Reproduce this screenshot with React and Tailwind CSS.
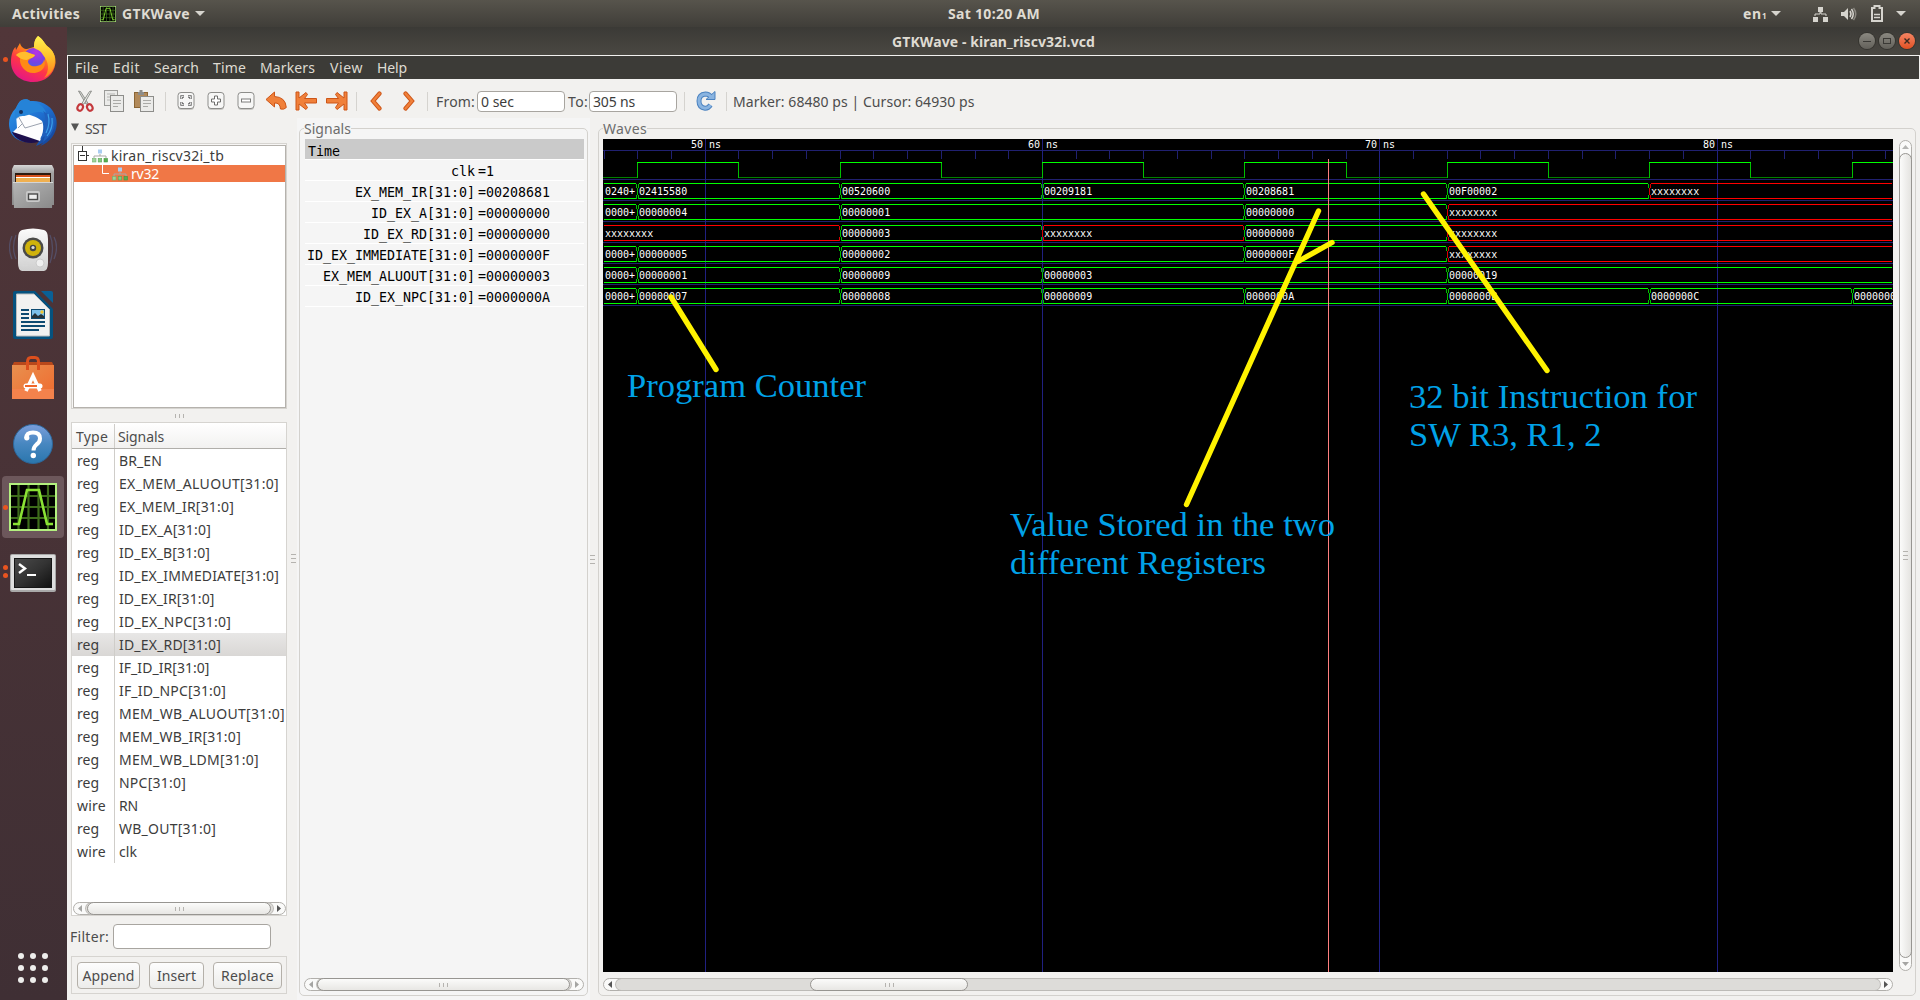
import { useLayoutEffect, useRef, useState } from "react";

const UI = "font-['Noto_Sans',sans-serif]";

/* One line of text, tracked so that it fills exactly `w` pixels. */
function T({ children, w, className = "" }) {
  const ref = useRef(null);
  const [ls, setLs] = useState(0);
  useLayoutEffect(() => {
    const r = document.createRange();
    r.selectNodeContents(ref.current);
    const nat = r.getBoundingClientRect().width;
    setLs((w - nat) / String(children).length);
  }, []);
  return (
    <span className={`inline-block shrink-0 whitespace-nowrap ${className}`} style={{ width: w, letterSpacing: ls }}>
      <span ref={ref}>{children}</span>
    </span>
  );
}

/* ---------- launcher icons (48 x 48) ---------- */
const Firefox = () => (
  <svg width="48" height="48" viewBox="0 0 48 48">
    <defs>
      <linearGradient id="ff1" x1="0.8" y1="0" x2="0.3" y2="1">
        <stop offset="0" stopColor="#fff44f" /><stop offset="0.35" stopColor="#ff980e" /><stop offset="0.65" stopColor="#ff3647" /><stop offset="1" stopColor="#e31587" />
      </linearGradient>
      <radialGradient id="ff2" cx="0.6" cy="0.2" r="0.9">
        <stop offset="0" stopColor="#b833e1" /><stop offset="0.5" stopColor="#7542e5" /><stop offset="1" stopColor="#3a6fd8" />
      </radialGradient>
      <linearGradient id="ff3" x1="0.5" y1="0" x2="0.5" y2="1">
        <stop offset="0" stopColor="#fff44f" /><stop offset="0.5" stopColor="#ffc02b" /><stop offset="1" stopColor="#ff7a1e" />
      </linearGradient>
    </defs>
    <path d="M29 1 C34 4 35 8 38 11 C44 15 47 21 46.500 28 C45 40 36 47 24 47 C11 47 2 38 2 27 C2 20 4 14 6.500 12 L7 15 L11 8 C12 12 15 14 18 14 L25 12 C25 7 26 4 29 1Z" fill="url(#ff1)" />
    <circle cx="25" cy="24" r="11" fill="url(#ff2)" />
    <path d="M29 1 C34 4 35 8 38 11 C45 16 47 22 45.500 30 C44 36 40 41 35 43 C41 36 40 27 34 20 C32 16 29 15 25 13 C25 7 26 4 29 1Z" fill="url(#ff3)" />
    <path d="M7 20 C11 16 17 16 20 18 L26 20 C25 23 21 23 19 26 C19 30 23 32 28 31 C33 30 35 27 35 24 C38 30 34 37 26 38 C16 39 10 30 11 23Z" fill="#ff8a16" />
    <path d="M7 20 C11 16 17 16 20 18 L26 20 C25 23 21 23 18 25 C14 25 10 23 7 20Z" fill="#ffbd2e" />
  </svg>
);

const Thunderbird = () => (
  <svg width="50" height="48" viewBox="0 0 50 48">
    <defs>
      <linearGradient id="tb1" x1="0" y1="0" x2="1" y2="1">
        <stop offset="0" stopColor="#2f9bea" /><stop offset="0.5" stopColor="#1f6fd0" /><stop offset="1" stopColor="#123a8c" />
      </linearGradient>
    </defs>
    <path d="M14 1 C17 0 20 0 22 2 C34 1 45 7 48 19 C51 31 44 43 32 47 L35 44 L28 47 L31 42 C20 45 8 43 3 34 C-1 25 1 16 8 9 C10 5 11 2 14 1Z" fill="url(#tb1)" />
    <path d="M4 33 C8 42 20 46 30 43 L33 40 L5 33Z" fill="#1d0f4d" />
    <path d="M8 15 L9 29 L5 33 L32 42 C34 38 37 28 34 22 C28 17 16 13 8 15Z" fill="#fdfdfe" />
    <path d="M10 17 L17 29 L34 24 M10 29 L14 25" stroke="#8e96a5" strokeWidth="0.900" fill="none" />
    <path d="M22 2 C32 3 38 9 39 18 C38 13 29 11 20 16 C15 18 10 16 9 20 C4 17 8 5 14 1 C17 0 20 0 22 2Z" fill="#2583d8" />
    <path d="M35 12 C40 20 37 32 32 40 L37 37 L35 43 C44 37 48 28 46 19Z" fill="#2060bd" />
    <path d="M40 15 C42 22 41 28 38 34 M44 19 C45 26 43 32 39 37" stroke="#3aa0ea" strokeWidth="1.200" fill="none" />
    <circle cx="13" cy="13" r="2" fill="#15315f" />
  </svg>
);

const Files = () => (
  <svg width="48" height="48" viewBox="0 0 48 48">
    <defs>
      <linearGradient id="fl1" x1="0" y1="0" x2="0" y2="1"><stop offset="0" stopColor="#d7d7d7" /><stop offset="0.2" stopColor="#a2a2a2" /><stop offset="1" stopColor="#8b8b8b" /></linearGradient>
      <linearGradient id="fl2" x1="0" y1="0" x2="1" y2="1"><stop offset="0" stopColor="#b5b5b5" /><stop offset="1" stopColor="#8a8a8a" /></linearGradient>
    </defs>
    <path d="M5 2 H43 L45 6 V42 H3 V6Z" fill="url(#fl1)" />
    <rect x="6" y="10" width="36" height="9" fill="#2e1a10" />
    <rect x="7" y="12" width="34" height="3" fill="#d9531e" />
    <rect x="7" y="14" width="34" height="5" fill="#f0b050" />
    <rect x="7" y="14" width="34" height="1" fill="#fff" />
    <path d="M4 19 H44 L43 45 H5Z" fill="url(#fl2)" />
    <path d="M4 19.500 H44" stroke="#d5d5d5" />
    <rect x="17" y="28" width="14" height="11" rx="2" fill="#c9c9c9" />
    <rect x="19.500" y="31" width="9" height="5.500" fill="#eee" stroke="#4a4a4a" strokeWidth="1.400" />
  </svg>
);

const Rhythmbox = () => (
  <svg width="48" height="48" viewBox="0 0 48 48">
    <defs><linearGradient id="rb" x1="0" y1="0" x2="0" y2="1"><stop offset="0" stopColor="#fbfbfb" /><stop offset="1" stopColor="#cfcfcf" /></linearGradient></defs>
    <g fill="none" stroke="#5d6d9c" opacity="0.45" strokeWidth="1.300">
      <path d="M7 8 Q2 20 7 32" /><path d="M3 9 Q-2 20 3 32" /><path d="M41 8 Q46 20 41 36" /><path d="M45 10 Q50 20 45 32" /><path d="M11 6 Q7 20 11 34" />
    </g>
    <path d="M13 3 Q24 0 35 3 Q39 4 39 12 V36 Q39 43 35 44 H13 Q9 43 9 36 V12 Q9 4 13 3Z" fill="url(#rb)" />
    <circle cx="24" cy="21" r="10.500" fill="#4a4a48" />
    <circle cx="24" cy="21" r="8" fill="#cfb20c" />
    <circle cx="24" cy="21" r="3.200" fill="#444" />
    <circle cx="24" cy="20.500" r="1.600" fill="#ddd" />
    <circle cx="31" cy="36" r="4" fill="#efefef" stroke="#c4c4c4" strokeWidth="0.800" />
    <rect x="14" y="35" width="4" height="4" fill="none" stroke="#d8d8d8" strokeWidth="0.800" />
  </svg>
);

const Writer = () => (
  <svg width="48" height="48" viewBox="0 0 48 48">
    <path d="M6 0 H26 L44 18 V46 Q44 48 42 48 H6 Q4 48 4 46 V2 Q4 0 6 0Z" fill="#05527f" />
    <path d="M32 0 H42 Q44 0 44 2 V12Z" fill="#0a6096" />
    <path d="M7.500 3 H25 L40.500 18.500 V45 H7.500Z" fill="#f2f2f1" stroke="#bdbdbd" />
    <g fill="#0d4a71">
      <rect x="12" y="18" width="8" height="2" /><rect x="12" y="22" width="8" height="2" /><rect x="12" y="26" width="8" height="2" />
      <rect x="12" y="30" width="24" height="2" /><rect x="12" y="34" width="24" height="2" /><rect x="12" y="38" width="18" height="2" />
      <rect x="22" y="18" width="14" height="10" />
    </g>
    <rect x="23" y="19" width="12" height="8" fill="#7cc0ea" />
    <circle cx="33" cy="21" r="1.700" fill="#f2c530" />
    <path d="M23 27 V25 L26 22 L29 25 L32 23 L35 25 V27Z" fill="#263238" />
  </svg>
);

const Software = () => (
  <svg width="48" height="48" viewBox="0 0 48 48">
    <defs><linearGradient id="sw" x1="0" y1="0" x2="1" y2="1"><stop offset="0" stopColor="#e8904f" /><stop offset="1" stopColor="#f06a2e" /></linearGradient></defs>
    <path d="M3 11 L5 7 H43 L45 11Z" fill="#b8481b" />
    <rect x="3" y="10" width="42" height="34" fill="url(#sw)" />
    <rect x="3" y="34" width="42" height="10" fill="#f4824c" />
    <path d="M18.500 15 V7 Q18.500 2.500 22 2.500 H26 Q29.500 2.500 29.500 7 V15" stroke="#dc4f1d" strokeWidth="3" fill="none" />
    <path d="M17 36 L24 21 L31 36" stroke="#fff" strokeWidth="3.600" fill="none" />
    <rect x="14.500" y="28.500" width="19" height="5" rx="2.500" fill="#fff" />
    <rect x="16" y="30" width="12" height="2" fill="#f0672b" />
  </svg>
);

const HelpIcon = () => (
  <svg width="48" height="48" viewBox="0 0 48 48">
    <defs><linearGradient id="hp" x1="0" y1="0" x2="0" y2="1"><stop offset="0" stopColor="#7a9edb" /><stop offset="0.5" stopColor="#4787c0" /><stop offset="1" stopColor="#2a76ad" /></linearGradient></defs>
    <circle cx="24" cy="25" r="19.500" fill="url(#hp)" stroke="#2c6699" />
    <path d="M17.500 19 Q17 13.500 24 13.500 Q31 13.500 31 19.500 Q31 23 27.500 25.500 Q24.500 28 24.500 31.500" stroke="#fff" strokeWidth="4" fill="none" />
    <circle cx="17.800" cy="18.800" r="2.600" fill="#fff" />
    <circle cx="24.300" cy="36.500" r="2.700" fill="#fff" />
  </svg>
);

const WaveIcon = ({ s = 48 }) => (
  <svg width={s} height={s} viewBox="0 0 48 48" className="shrink-0">
    <rect width="48" height="48" fill="#b3f07f" />
    <rect x="2" y="2" width="44" height="44" fill="#000" />
    <path d="M9.500 2 V46 M19.500 2 V46 M29.500 2 V46 M39 2 V46 M2 13 H46 M2 24 H46 M2 35 H46" stroke="#3d6b1a" strokeWidth="2.200" />
    <path d="M4 41 H10 L18 7 H30 L38 41 H44" stroke="#8ae234" strokeWidth="2.600" fill="none" />
  </svg>
);

const Terminal = () => (
  <svg width="48" height="48" viewBox="0 0 48 48">
    <defs><linearGradient id="tm" x1="0" y1="0" x2="1" y2="1"><stop offset="0" stopColor="#4a4a4a" /><stop offset="0.5" stopColor="#333" /><stop offset="1" stopColor="#111" /></linearGradient></defs>
    <rect x="1" y="7" width="46" height="38" rx="2" fill="#a9a9a9" />
    <rect x="2" y="8" width="44" height="35" rx="1" fill="#dedede" />
    <rect x="5" y="11" width="38" height="30" fill="#161616" />
    <rect x="6" y="12" width="36" height="28" fill="url(#tm)" />
    <path d="M10 17 L16 21.500 L10 26" stroke="#fff" strokeWidth="2.400" fill="none" />
    <path d="M18 28 H27" stroke="#fff" strokeWidth="2" />
  </svg>
);

const LAUNCHERS = [
  { I: Firefox, dots: 1 }, { I: Thunderbird }, { I: Files }, { I: Rhythmbox }, { I: Writer },
  { I: Software }, { I: HelpIcon }, { I: WaveIcon, dots: 1, active: true }, { I: Terminal, dots: 2 },
];

function Launcher() {
  return (
    <div className="flex w-[67px] shrink-0 flex-col justify-between bg-gradient-to-b from-[#513639] to-[#3f2f34]">
      <div className="flex flex-col">
        {LAUNCHERS.map(({ I, dots = 0, active }, i) => (
          <div key={i} className="flex h-16 items-center">
            <div className="flex w-2 flex-col items-end gap-[3px]">
              {Array.from({ length: dots }, (_, k) => <span key={k} className="z-10 size-[5px] rounded-full bg-[#e95420]" />)}
            </div>
            {active
              ? <div className="-ml-1.5 flex h-[62px] w-[62px] items-center justify-center rounded-[4px] bg-[#6c575b]"><I /></div>
              : <div className="flex w-[50px] justify-center"><I /></div>}
          </div>
        ))}
      </div>
      <div className="mb-[17px] ml-[18px] grid w-[30px] grid-cols-3 gap-x-[6px] gap-y-[6px]">
        {Array.from({ length: 9 }, (_, k) => <span key={k} className="size-[6px] rounded-full bg-[#eeeeec]" />)}
      </div>
    </div>
  );
}

const Down = ({ className = "" }) => (
  <svg width="10" height="5" viewBox="0 0 10 5" className={`shrink-0 ${className}`}><path d="M0 0H10L5 5Z" fill="#d6d4ce" /></svg>
);

function TopBar() {
  return (
    <div className="flex h-[27px] shrink-0 items-center bg-gradient-to-b from-[#57544c] to-[#403e39] text-[14px] font-bold text-[#dfdbd2]">
      <T w={68} className="ml-3">Activities</T>
      <span className="ml-5 flex"><WaveIcon s={16} /></span>
      <T w={68} className="ml-1.5">GTKWave</T>
      <Down className="ml-[5px]" />
      <T w={92} className="ml-[743px] -mt-px">Sat 10:20 AM</T>
      <T w={19} className="ml-[703px]">en</T>
      <span className="w-[6px] pt-1 text-[8px]">1</span>
      <Down className="ml-[3px] -mt-px" />
      <svg width="16" height="16" viewBox="0 0 16 16" className="ml-[32px]" fill="#d6d4ce"><rect x="5" y="1" width="5" height="5" /><rect x="0" y="11" width="5" height="5" /><rect x="10" y="11" width="5" height="5" /><path d="M2 10V8H7V6H8V8H13V10" fill="none" stroke="#d6d4ce" /></svg>
      <svg width="16" height="14" viewBox="0 0 16 14" className="ml-[12px]"><path d="M0 5H3L7 1V13L3 9H0Z" fill="#d6d4ce" /><path d="M9 4Q11 7 9 10M10.500 2Q14 7 10.500 12" stroke="#d6d4ce" strokeWidth="1.500" fill="none" /><path d="M12.500 1Q17 7 12.500 13" stroke="#8a8780" strokeWidth="1.500" fill="none" /></svg>
      <svg width="12" height="17" viewBox="0 0 12 17" className="ml-[14px]"><path d="M1 3H3.500V1H8.500V3H11V16H1Z" fill="none" stroke="#d6d4ce" strokeWidth="2" /><path d="M3 9.500H9M3 12.500H9" stroke="#d6d4ce" strokeWidth="1.600" /></svg>
      <Down className="ml-[13px]" />
    </div>
  );
}

function TitleBar() {
  return (
    <div className="flex h-[28px] shrink-0 items-center bg-gradient-to-b from-[#3b3a36] to-[#4a4842] text-[14px] font-bold text-[#dfdbd2]">
      <T w={203} className="ml-[825px]">GTKWave - kiran_riscv32i.vcd</T>
      <div className="ml-auto flex gap-1 pr-[5px]">
        <span className="flex size-4 items-center justify-center rounded-full bg-gradient-to-b from-[#8b8981] to-[#62605a] ring-1 ring-[#35342f]"><span className="h-px w-2 bg-[#3a3935]" /></span>
        <span className="flex size-4 items-center justify-center rounded-full bg-gradient-to-b from-[#8b8981] to-[#62605a] ring-1 ring-[#35342f]"><span className="h-[6px] w-2 border border-[#3a3935]" /></span>
        <span className="flex size-4 items-center justify-center rounded-full bg-gradient-to-b from-[#f58462] to-[#e05020] ring-1 ring-[#35342f]">
          <svg width="6" height="6" viewBox="0 0 6 6"><path d="M.5 .5L5.500 5.500M5.500 .5L.5 5.500" stroke="#3a2a20" strokeWidth="1.400" /></svg>
        </span>
      </div>
    </div>
  );
}

function MenuBar() {
  return (
    <div className="ml-px mr-px flex h-[23px] shrink-0 items-center bg-[#3c3b37] pl-[7px] text-[14px] text-[#dfdbd2]">
      <T w={24}>File</T>
      <T w={27} className="ml-[14px]">Edit</T>
      <T w={45} className="ml-[14px]">Search</T>
      <T w={33} className="ml-[14px]">Time</T>
      <T w={55} className="ml-[14px]">Markers</T>
      <T w={33} className="ml-[15px]">View</T>
      <T w={30} className="ml-[14px]">Help</T>
    </div>
  );
}

const Sep = ({ className = "" }) => <span className={`h-[19px] w-px shrink-0 bg-[#d5d3cf] ${className}`} />;

const Tile = ({ children, className = "" }) => (
  <svg width="18" height="19" viewBox="0 0 18 19" className={`shrink-0 ${className}`}>
    <rect x="1" y="1.500" width="16" height="16.500" rx="3" fill="#c9c8c5" />
    <rect x="1" y="0.500" width="16" height="16" rx="3" fill="#f7f7f6" stroke="#8d8d8a" />
    {children}
  </svg>
);

const orange = { fill: "#f0803a", stroke: "#cd5517", strokeWidth: 1, strokeLinejoin: "round" };

function ToolBar() {
  return (
    <div className="flex h-[44px] shrink-0 items-center pl-[9px] text-[14px] text-[#4c4c4c]">
      <svg width="18" height="22" viewBox="0 0 18 22" className="shrink-0">
        <path d="M2.500 1L4.500 1.500L12.500 14H10Z" fill="#d5d7d3" stroke="#868883" strokeWidth="0.900" />
        <path d="M15.500 1L13.500 1.500L5.500 14H8Z" fill="#eceeea" stroke="#868883" strokeWidth="0.900" />
        <ellipse cx="4.200" cy="17.500" rx="2.600" ry="3.300" fill="none" stroke="#c4383c" strokeWidth="2.200" transform="rotate(25 4.200 17.500)" />
        <ellipse cx="13.800" cy="17.500" rx="2.600" ry="3.300" fill="none" stroke="#c4383c" strokeWidth="2.200" transform="rotate(-25 13.800 17.500)" />
      </svg>
      <svg width="20" height="22" viewBox="0 0 20 22" className="ml-[10px] shrink-0">
        <rect x="0.500" y="0.500" width="13" height="15" fill="#ebebe9" stroke="#9b9b98" /><path d="M3 4H11M3 7H11M3 10H8" stroke="#b5b5b2" />
        <rect x="6.500" y="5.500" width="13" height="16" fill="#ebebe9" stroke="#8d8d8a" /><path d="M9 10.500H17M9 13.500H17M9 16.500H14" stroke="#aaaaa7" />
      </svg>
      <svg width="20" height="22" viewBox="0 0 20 22" className="ml-[10px] shrink-0">
        <rect x="0.500" y="2.500" width="13" height="15" fill="#b28a5a" stroke="#8b6635" /><path d="M4 5V2H5.500V0H8.500V2H10V5Z" fill="#8d8d8a" />
        <rect x="6.500" y="6.500" width="13" height="15" fill="#ebebe9" stroke="#8d8d8a" /><path d="M9 10.500H17M9 13.500H17M9 16.500H14" stroke="#aaaaa7" />
      </svg>
      <Sep className="ml-[11px]" />
      <Tile className="ml-[11px]"><path d="M4.500 7V4.500H7M11 4.500H13.500V7M13.500 10V12.500H11M7 12.500H4.500V10" fill="none" stroke="#666" strokeWidth="2.400" /><path d="M4.500 6.600V4.500H6.600M11.400 4.500H13.500V6.600M13.500 10.400V12.500H11.400M6.600 12.500H4.500V10.400" fill="none" stroke="#fff" strokeWidth="0.800" /></Tile>
      <Tile className="ml-[12px]"><path d="M7.500 4H10.500V7H13.500V10H10.500V13H7.500V10H4.500V7H7.500Z" fill="#fff" stroke="#6e6e6c" /></Tile>
      <Tile className="ml-[12px]"><rect x="4.500" y="7" width="9" height="3" fill="#fff" stroke="#7c7c7a" /></Tile>
      <svg width="22" height="20" viewBox="0 0 22 20" className="ml-[10px] shrink-0"><path {...orange} d="M9.500 1L1 8.500L9.500 16V12Q15 11.500 15.500 18Q19 19 21.300 16.500Q20.500 6 9.500 5.500Z" /></svg>
      <svg width="23" height="20" viewBox="0 0 23 20" className="ml-[8px] shrink-0"><path {...orange} d="M1 1H4V7L11 1.500L12.500 3.500L9.500 7.500H21.500V12H9.500L12.500 16.500L11 18.500L4 13V19H1Z" /></svg>
      <svg width="23" height="20" viewBox="0 0 23 20" className="ml-[7px] shrink-0"><path {...orange} d="M22 1H19V7L12 1.500L10.500 3.500L13.500 7.500H1.500V12H13.500L10.500 16.500L12 18.500L19 13V19H22Z" /></svg>
      <Sep className="ml-[8px]" />
      <svg width="12" height="20" viewBox="0 0 12 20" className="ml-[13px] shrink-0"><path d="M9.500 2.500L3 10L9.500 17.500" fill="none" stroke="#cd5517" strokeWidth="4.200" strokeLinecap="round" /><path d="M9.500 2.500L3 10L9.500 17.500" fill="none" stroke="#f0803a" strokeWidth="2.400" strokeLinecap="round" /></svg>
      <svg width="12" height="20" viewBox="0 0 12 20" className="ml-[21px] shrink-0"><path d="M2.500 2.500L9 10L2.500 17.500" fill="none" stroke="#cd5517" strokeWidth="4.200" strokeLinecap="round" /><path d="M2.500 2.500L9 10L2.500 17.500" fill="none" stroke="#f0803a" strokeWidth="2.400" strokeLinecap="round" /></svg>
      <Sep className="ml-[12px]" />
      <T w={39} className="ml-[8px]">From:</T>
      <div className="ml-[2px] flex h-[21px] w-[88px] items-center rounded-[4px] border border-[#a8a5a0] bg-white pl-[3px] pt-px text-[#3c3c3c]"><T w={33}>0 sec</T></div>
      <T w={20} className="ml-[3px]">To:</T>
      <div className="ml-[1px] flex h-[21px] w-[88px] items-center rounded-[4px] border border-[#a8a5a0] bg-white pl-[3px] pt-px text-[#3c3c3c]"><T w={42}>305 ns</T></div>
      <Sep className="ml-[7px]" />
      <svg width="20" height="22" viewBox="0 0 20 22" className="ml-[11px] shrink-0">
        <path d="M14.500 15Q12 18.500 9 18.200Q3 17.500 3 11Q3 4.500 9.500 4Q13 4 15 7" fill="none" stroke="#4c83c0" strokeWidth="5" />
        <path d="M10 9.500H19V1.500Z" fill="#8ab4e0" stroke="#4c83c0" />
        <path d="M14.500 15Q12 18.500 9 18.200Q3 17.500 3 11Q3 4.500 9.500 4Q13 4 15 7" fill="none" stroke="#8ab4e0" strokeWidth="3" />
      </svg>
      <Sep className="ml-[10px]" />
      <T w={241.5} className="ml-[6px]">Marker: 68480 ps | Cursor: 64930 ps</T>
    </div>
  );
}

const Grip = ({ v, className = "" }) => (
  <span className={`flex gap-[3px] ${v ? "flex-col" : ""} ${className}`}>
    {[0, 1, 2].map((k) => <span key={k} className={v ? "h-px w-[5px] bg-[#b5b3af]" : "h-[4px] w-px bg-[#b5b3af]"} />)}
  </span>
);

const Arrow = ({ d, c }) => {
  const p = { l: "M5 0V7L1 3.500Z", r: "M1 0V7L5 3.500Z", u: "M0 5H7L3.500 1Z", d: "M0 1H7L3.500 5Z" }[d];
  return <svg width="7" height="7" viewBox="0 0 7 7"><path d={p} fill={c} /></svg>;
};

/* Horizontal scroll bar: left arrow, trough with thumb, right arrow. */
function HScroll({ before, thumb, left = "#a5a5a3", right = "#a5a5a3", className = "" }) {
  return (
    <div className={`flex h-[13px] shrink-0 items-center rounded-full border border-[#b1afab] bg-[#fafaf9] ${className}`}>
      <span className="flex w-3 shrink-0 justify-center"><Arrow d="l" c={left} /></span>
      <div className="flex h-full grow items-center rounded-full bg-[#dddcd9] ring-1 ring-[#bdbbb7]">
        <div className="flex h-[13px] shrink-0 items-center justify-center rounded-full border border-[#979591] bg-gradient-to-b from-[#fbfbfa] to-[#e8e7e4]" style={{ marginLeft: before, width: thumb }}><Grip /></div>
      </div>
      <span className="flex w-3 shrink-0 justify-center"><Arrow d="r" c={right} /></span>
    </div>
  );
}

const TreeIcon = () => (
  <svg width="16" height="14" viewBox="0 0 16 14" className="shrink-0">
    <rect x="6" y="0.500" width="4" height="4" fill="#a9cdf2" /><path d="M8 5V7M2 9V7H14V9" stroke="#a9a9a7" fill="none" />
    <rect x="0.500" y="9.500" width="3.500" height="3.500" fill="#9fd39b" stroke="#72b36d" strokeWidth="0.600" /><rect x="6.200" y="9.500" width="3.500" height="3.500" fill="#86c981" stroke="#5ba556" strokeWidth="0.600" /><rect x="12" y="9.500" width="3.500" height="3.500" fill="#57ae52" stroke="#43963e" strokeWidth="0.600" />
  </svg>
);

const SIGNALS = [
  ["reg", "BR_EN", 43], ["reg", "EX_MEM_ALUOUT[31:0]", 160], ["reg", "EX_MEM_IR[31:0]", 115], ["reg", "ID_EX_A[31:0]", 92],
  ["reg", "ID_EX_B[31:0]", 91], ["reg", "ID_EX_IMMEDIATE[31:0]", 160], ["reg", "ID_EX_IR[31:0]", 95.5], ["reg", "ID_EX_NPC[31:0]", 112],
  ["reg", "ID_EX_RD[31:0]", 102], ["reg", "IF_ID_IR[31:0]", 90.5], ["reg", "IF_ID_NPC[31:0]", 107], ["reg", "MEM_WB_ALUOUT[31:0]", 166],
  ["reg", "MEM_WB_IR[31:0]", 122], ["reg", "MEM_WB_LDM[31:0]", 140], ["reg", "NPC[31:0]", 67], ["wire", "RN", 19],
  ["reg", "WB_OUT[31:0]", 97], ["wire", "clk", 18],
];

const Button = ({ children, w, className }) => (
  <div className={`flex h-[27px] items-center justify-center rounded-[4px] border border-[#b4b0a9] bg-gradient-to-b from-[#fdfdfd] to-[#ececea] ${className}`}><T w={w}>{children}</T></div>
);

function LeftPanel() {
  return (
    <div className="flex w-[230px] shrink-0 flex-col pl-1 text-[14px] text-[#3c3c3c]">
      <div className="flex h-[25px] items-start text-[#4c4c4c]">
        <svg width="8" height="8" viewBox="0 0 8 8" className="mt-[5px]"><path d="M0 .5H8L4 8Z" fill="#555" /></svg>
        <T w={21} className="ml-[6px]">SST</T>
      </div>
      <div className="h-[266px] w-[216px] border border-[#d6d4d0] bg-[#f7f6f5] pt-px pl-px">
        <div className="flex h-full flex-col border border-[#b5b2ad] bg-white">
          <div className="flex h-[19px] items-center pl-1">
            <svg width="11" height="19" viewBox="0 0 11 19" className="shrink-0"><path d="M4.500 0V5M0.500 5.500H8.500V14.500H0.500ZM2 9.500H7M9 9.500H11" stroke="#333" fill="none" shapeRendering="crispEdges" /></svg>
            <span className="ml-[3px] flex"><TreeIcon /></span>
            <T w={113} className="ml-[3px]">kiran_riscv32i_tb</T>
          </div>
          <div className="flex h-[17px] items-center bg-[#f07746] pl-[28px] text-white">
            <svg width="8" height="17" viewBox="0 0 8 17" className="shrink-0"><path d="M0.500 0V8.500H7" stroke="#fff" fill="none" /></svg>
            <span className="ml-[2px] flex"><TreeIcon /></span>
            <T w={28} className="ml-[3px]">rv32</T>
          </div>
        </div>
      </div>
      <div className="flex h-[13px] items-center justify-center pt-px pr-[10px]"><Grip /></div>
      <div className="flex h-[494px] w-[216px] flex-col border border-[#d6d4d0] bg-white">
        <div className="flex h-[26px] shrink-0 items-center border-b border-[#b0aeaa] bg-gradient-to-b from-white to-[#f2f1f0] pt-px text-[#4c4c4c]">
          <div className="flex h-full w-[43px] items-center border-r border-[#cfcdc9] pl-1"><T w={32}>Type</T></div>
          <T w={46} className="ml-[3px]">Signals</T>
        </div>
        {SIGNALS.map(([type, name, w]) => (
          <div key={name} className={`flex h-[23px] shrink-0 items-center ${name === "ID_EX_RD[31:0]" ? "bg-gradient-to-b from-[#e8e7e6] to-[#d9d7d5]" : ""}`}>
            <div className="flex h-full w-[43px] items-center border-r border-[#cfcdc9] pl-[5px]"><T w={type === "reg" ? 22 : 29}>{type}</T></div>
            <T w={w} className="ml-1">{name}</T>
          </div>
        ))}
        <HScroll before={1} thumb={184} right="#555" className="ml-px mt-auto" />
      </div>
      <div className="-ml-px mt-[8px] flex h-[25px] items-center text-[#4c4c4c]">
        <T w={39}>Filter:</T>
        <div className="ml-1 h-[25px] w-[158px] rounded-[4px] border border-[#a8a5a0] bg-white" />
      </div>
      <div className="mt-[7px] flex h-[38px] w-[216px] items-center border border-[#d6d4d0] pl-[5px] text-[#4c4c4c]">
        <Button w={52} className="w-[63px]">Append</Button>
        <Button w={39} className="ml-[9px] w-[55px]">Insert</Button>
        <Button w={53} className="ml-[9px] w-[69px]">Replace</Button>
      </div>
    </div>
  );
}

const ROWS = [
  ["clk", "1"], ["EX_MEM_IR[31:0]", "00208681"], ["ID_EX_A[31:0]", "00000000"], ["ID_EX_RD[31:0]", "00000000"],
  ["ID_EX_IMMEDIATE[31:0]", "0000000F"], ["EX_MEM_ALUOUT[31:0]", "00000003"], ["ID_EX_NPC[31:0]", "0000000A"],
];

function SignalsPanel() {
  return (
    <div className="flex w-[293px] shrink-0 flex-col bg-[#f5f5f5] pl-[2px]">
      <fieldset className="flex h-[878px] w-[288px] flex-col rounded-[5px] border border-[#d3d1cd] px-[3px]">
        <legend className="ml-px flex h-[21px] items-center text-[14px] text-[#6c6c6c]"><T w={47}>Signals</T></legend>
        <div className="ml-[2px] flex h-full w-[279px] flex-col font-['DejaVu_Sans_Mono',monospace] text-[13.300px] text-black">
          <div className="flex h-[21px] items-center border-b border-white bg-[#cacaca] pl-[3px] pt-[5px]">Time</div>
          {ROWS.map(([n, v]) => (
            <div key={n} className="flex h-[21px] items-center border-b border-white pt-[3px]">
              <span className="w-[170px] text-right">{n}</span>
              <span className="ml-[3px]">={v}</span>
            </div>
          ))}
        </div>
      </fieldset>
    </div>
  );
}

/* ---------- waveform ---------- */
const nsX = (t) => Math.round(1042 + (t - 60) * 33.73);
const BUSES = [
  [[null, "0240+"], [48, "02415580"], [54, "00520600"], [60, "00209181"], [66, "00208681"], [72, "00F00002"], [78, "xxxxxxxx"]],
  [[null, "0000+"], [48, "00000004"], [54, "00000001"], [66, "00000000"], [72, "xxxxxxxx"]],
  [[null, "xxxxxxxx"], [54, "00000003"], [60, "xxxxxxxx"], [66, "00000000"], [72, "xxxxxxxx"]],
  [[null, "0000+"], [48, "00000005"], [54, "00000002"], [66, "0000000F"], [72, "xxxxxxxx"]],
  [[null, "0000+"], [48, "00000001"], [54, "00000009"], [60, "00000003"], [72, "00000019"]],
  [[null, "0000+"], [48, "00000007"], [54, "00000008"], [60, "00000009"], [66, "0000000A"], [72, "0000000B"], [78, "0000000C"], [84, "0000000D"]],
];

function Bus({ segs, row }) {
  const top = 183.5 + row * 21;
  const bot = top + 15;
  return segs.map(([t, label], i) => {
    const x = t === null ? 604 : nsX(t);
    const next = segs[i + 1];
    const e = next ? nsX(next[0]) : 1892;
    const bad = label[0] === "x";
    const line = bad ? "#ff0000" : "#00ff00";
    const edge = bad ? "#d80000" : "#00c000";
    const l = t === null ? x : x + 2;
    const r = next ? e - 1 : e;
    return (
      <g key={i}>
        <path d={`M${l} ${top}H${r}M${l} ${bot}H${r}`} stroke={line} />
        {t !== null && <path d={`M${x + 1.5} ${top}V${top + 4}M${x + 0.5} ${top + 4}V${bot - 4}M${x + 1.5} ${bot - 4}V${bot}`} stroke={edge} />}
        {next && <path d={`M${e - 0.5} ${top}V${top + 4}M${e + 0.5} ${top + 4}V${bot - 4}M${e - 0.5} ${bot - 4}V${bot}`} stroke={edge} />}
        <text x={t === null ? 605 : x + 2} y={top + 11.5} fill="#fff">{label}</text>
      </g>
    );
  });
}

function WaveCanvas() {
  const ticks = [];
  for (let t = 47; t <= 85; t++) if (t % 10) ticks.push(nsX(t));
  const clock = [];
  for (let t = 48; t <= 84; t += 6) clock.push([nsX(t), nsX(t + 3), nsX(t + 6)]);
  return (
    <svg width="1290" height="833" viewBox="603 139 1290 833" className="shrink-0 bg-black font-['DejaVu_Sans_Mono',monospace] text-[10px]">
      <g shapeRendering="crispEdges" fill="none">
        <path d="M603 150.500H1893" stroke="#202070" />
        {[0, 1, 2, 3, 4, 5, 6].map((k) => <path key={k} d={`M603 ${179.5 + 21 * k}H1893`} stroke="#202070" />)}
        {ticks.map((x) => <path key={x} d={`M${x + 0.5} 150V159`} stroke="#202070" />)}
        {[50, 60, 70, 80].map((t) => <path key={t} d={`M${nsX(t) + 0.5} 139V972`} stroke="#202080" />)}
        <path d={`M603 177.500H${nsX(48)}`} stroke="#008000" />
        {clock.map(([a, b, c]) => (
          <g key={a}>
            <path d={`M${a + 0.5} 178V162M${b + 0.5} 162V178`} stroke="#00c000" />
            <path d={`M${a} 162.500H${b + 1}`} stroke="#00ff00" />
            <path d={`M${b + 1} 177.500H${c}`} stroke="#008000" />
          </g>
        ))}
      </g>
      {[50, 60, 70, 80].map((t) => <text key={t} x={nsX(t) - 14} y="148" fill="#fff" xmlSpace="preserve">{`${t} ns`}</text>)}
      <g shapeRendering="crispEdges" fill="none">
        {BUSES.map((b, i) => <Bus key={i} segs={b} row={i} />)}
        <path d="M1328.500 159V972" stroke="#ff8080" />
      </g>
      <g stroke="#fff200" strokeWidth="5.400" strokeLinecap="round" fill="none">
        <path d="M671 297L716 369.500" />
        <path d="M1318.500 211L1186.500 504.500" />
        <path d="M1332 242.500L1298 261.500" />
        <path d="M1423.500 194L1547 370.500" />
      </g>
      <g className="font-['Liberation_Serif',serif] text-[34.500px]" fill="#00a2e8">
        <text x="627" y="396.500" textLength="239">Program Counter</text>
        <text x="1010" y="535.500" textLength="325">Value Stored in the two</text>
        <text x="1010" y="573.500" textLength="256">different Registers</text>
        <text x="1409" y="407.500" textLength="288">32 bit Instruction for</text>
        <text x="1409" y="445.500" textLength="192.500">SW R3, R1, 2</text>
      </g>
    </svg>
  );
}

function WavesPanel() {
  return (
    <div className="flex grow flex-col pl-[3px]">
      <fieldset className="flex h-[878px] w-[1318px] flex-col rounded-[5px] border border-[#d3d1cd] px-[3px]">
        <legend className="ml-px flex h-[21px] items-center text-[14px] text-[#6c6c6c]"><T w={44}>Waves</T></legend>
        <div className="ml-px flex">
          <WaveCanvas />
          <div className="ml-[6px] mt-px flex h-[831px] w-[13px] flex-col items-center rounded-full border border-[#b1afab] bg-[#fafaf9]">
            <span className="flex h-3 shrink-0 items-center"><Arrow d="u" c="#b5b5b3" /></span>
            <div className="flex w-[13px] grow items-center justify-center rounded-full border border-[#979591] bg-gradient-to-r from-[#fbfbfa] to-[#e4e3e0]"><Grip v /></div>
            <span className="flex h-3 shrink-0 items-center"><Arrow d="d" c="#a5a5a3" /></span>
          </div>
        </div>
      </fieldset>
    </div>
  );
}

/* Panels with their horizontal scroll bars laid over the frame's foot. */
function SignalsArea() {
  return (
    <div className="relative flex">
      <SignalsPanel />
      <div className="absolute bottom-[9px] left-[7px] flex w-[280px] flex-col"><HScroll before={0} thumb={253} /></div>
      <div className="absolute top-[436px] -left-[6px]"><Grip v /></div>
    </div>
  );
}

function WavesArea() {
  return (
    <div className="relative flex grow">
      <WavesPanel />
      <div className="absolute bottom-[9px] left-[8px] flex w-[1290px] flex-col"><HScroll before={194} thumb={158} left="#555" right="#555" /></div>
    </div>
  );
}

export default function App() {
  return (
    <div className={`flex h-[1000px] w-[1920px] flex-col overflow-hidden bg-[#f2f1ef] ${UI}`}>
      <TopBar />
      <div className="flex min-h-0 grow">
        <Launcher />
        <div className="flex min-w-0 grow flex-col">
          <TitleBar />
          <div className="h-px shrink-0 bg-[#f2f1ef]" />
          <MenuBar />
          <ToolBar />
          <div className="-mt-[5px] flex min-h-0 grow">
            <LeftPanel />
            <SignalsArea />
            <div className="flex w-[5px] items-center justify-center"><Grip v /></div>
            <WavesArea />
          </div>
        </div>
      </div>
    </div>
  );
}
